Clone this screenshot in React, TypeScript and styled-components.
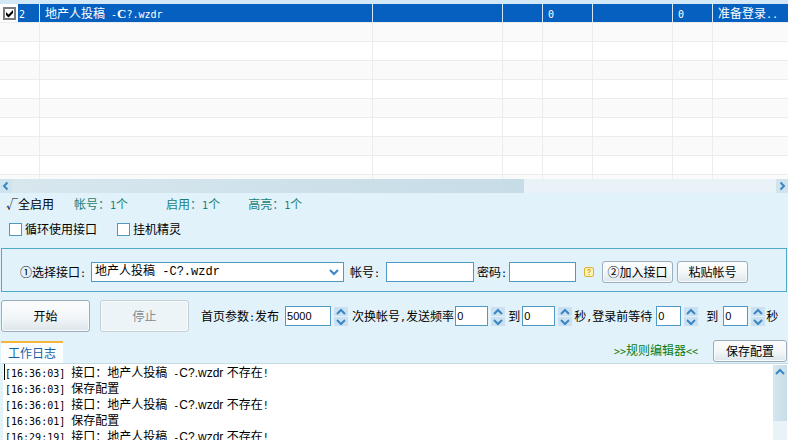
import React, { useId } from 'react';
import styled, { createGlobalStyle, css } from 'styled-components';

const cjk = '"Noto Sans CJK SC", "Liberation Sans", sans-serif';

const GlobalStyle = createGlobalStyle`
  *, *::before, *::after { box-sizing: border-box; }
  body { margin: 0; background: #e2f2fa; }
  body, button, input, select, textarea {
    font-family: ${cjk};
    font-size: 12px;
    line-height: 16px;
    color: #000;
  }
`;

const Window = styled.main`
  display: flex;
  flex-direction: column;
  height: 100vh;
  overflow: hidden;
  background: #e2f2fa;
  white-space: nowrap;
`;

/* Half-width characters: half of a 12px ideograph */
const Half = styled.span`
  font-family: "DejaVu Sans Mono", monospace;
  font-size: 10px;
  line-height: 1;
  white-space: pre;
`;

const SerifCap = styled.b`
  font-family: "Liberation Serif", serif;
  font-size: 13px;
  line-height: 1;
`;

/* ---------- account table ---------- */

const TablePane = styled.section`
  flex: none;
  height: 179px;
  overflow: hidden;
  border-top: 4px solid #d3e8f6;
  background: #fff;
`;

const Table = styled.table`
  width: 100%;
  table-layout: fixed;
  border-collapse: separate;
  border-spacing: 0;
`;

const Col = styled.col<{ $w?: number }>`
  ${p => p.$w && css`width: ${p.$w}px;`}
`;

const Row = styled.tr<{ $selected?: boolean }>`
  height: 19px;
  background: #fff;
  &:nth-child(even) { background: #fafafa; }
  ${p => p.$selected && css`
    color: #fff;
    td + td { background: #0560bf; border-right-color: #d6e8f8; }
  `}
`;

const Cell = styled.td<{ $first?: boolean; $tight?: boolean }>`
  height: 19px;
  padding: 0 0 0 ${p => (p.$first ? 3 : p.$tight ? 1 : 5)}px;
  border-bottom: 1px solid #ececec;
  border-right: ${p => (p.$first ? '0' : '1px solid #ececec')};
  line-height: 18px;
  overflow: hidden;
  &:last-child { border-right: 0; }
`;

const RowCheck = styled.label`
  display: grid;
  width: 13px;
  height: 13px;
  > * { grid-area: 1 / 1; }
`;

const RowCheckInput = styled.input`
  appearance: none;
  width: 13px;
  height: 13px;
  margin: 0;
  border: 2px solid #7c7c7c;
  background: #fff;
`;

const CheckMark = styled.svg`
  width: 13px;
  height: 13px;
  pointer-events: none;
`;

/* ---------- scroll bars ---------- */

const HBar = styled.div`
  flex: none;
  display: flex;
  height: 14px;
  background: #e9f2f6;
`;

const ArrowButton = styled.button`
  flex: none;
  display: grid;
  place-items: center;
  width: 12px;
  height: 14px;
  padding: 0;
  border: 0;
  background: #d0e4ee;
`;

const HTrack = styled.div`
  flex: 1;
`;

const HThumb = styled.div`
  width: 67%;
  height: 14px;
  background: linear-gradient(90deg, #d8e7ee, #c6dce7);
`;

const VBar = styled.div`
  flex: none;
  width: 14px;
  margin: 1px 1px 0 0;
  background: #e9f2f6;
`;

const VThumb = styled.div`
  height: 56px;
  padding-left: 1px;
  background: linear-gradient(90deg, #d6e6ee, #c6dde8);
  ${ArrowButton} { background: none; }
`;

/* ---------- status and options ---------- */

const Status = styled.div`
  flex: none;
  display: flex;
  align-items: center;
  height: 22px;
  padding-left: 6px;
`;

const Stat = styled.span<{ $gap: number }>`
  margin-left: ${p => p.$gap}px;
  color: #1b7f76;
`;

const Options = styled.div`
  flex: none;
  display: flex;
  align-items: center;
  gap: 20px;
  height: 28px;
  padding: 0 9px;
`;

const CheckLabel = styled.label`
  display: flex;
  align-items: center;
  gap: 3px;
`;

const CheckBox = styled.input`
  appearance: none;
  width: 13px;
  height: 13px;
  margin: 0;
  border: 1px solid #4f98c2;
  background: #fff;
  &:checked { background: #4f98c2; }
`;

/* ---------- forms ---------- */

const Panel = styled.form`
  flex: none;
  display: flex;
  align-items: center;
  height: 44px;
  margin: 5px 1px 0;
  padding: 4px 38px 0 18px;
  border: 1px solid #4fa9c9;
`;

const ParamRow = styled.form`
  flex: none;
  display: flex;
  align-items: center;
  height: 48px;
  padding-left: 1px;
`;

const Text = styled.label<{ $l?: number; $r?: number }>`
  flex: none;
  margin: 0 ${p => p.$r ?? 0}px 0 ${p => p.$l ?? 0}px;
`;

const box = css`
  height: 20px;
  border: 1px solid #5099c4;
  border-radius: 0;
  background: #fff;
  outline: none;
`;

const SelectWrap = styled.div`
  flex: 253 1 0;
  display: grid;
  grid-template-columns: 1fr auto;
  align-items: center;
`;

const Select = styled.select`
  ${box}
  grid-area: 1 / 1 / 2 / 3;
  appearance: none;
  width: 100%;
  padding: 0 16px 0 3px;
  font-family: "Liberation Mono", "Noto Sans CJK SC", monospace;
`;

const SelectArrow = styled.span`
  grid-area: 1 / 2;
  display: flex;
  margin-right: 5px;
  pointer-events: none;
`;

const Input = styled.input<{ $grow: number }>`
  ${box}
  flex: ${p => p.$grow} 1 0;
  min-width: 0;
  padding: 0 2px;
`;

const Button = styled.button<{ $w: number; $tall?: boolean; $l?: number }>`
  flex: none;
  width: ${p => p.$w}px;
  height: ${p => (p.$tall ? 32 : 22)}px;
  margin-left: ${p => p.$l ?? 0}px;
  padding: 0;
  border: 1px solid #9dadbb;
  border-radius: 3px;
  background: linear-gradient(#fcfdfd, #f3f7f9 50%, #dde6eb);
  box-shadow: inset 0 0 0 1px #f8fbfc;
  &:disabled {
    color: #858b8e;
    border-color: #c3ced5;
    background: #edf4f7;
  }
`;

const HelpButton = styled.button`
  flex: none;
  display: flex;
  margin: 0 8px;
  padding: 0;
  border: 0;
  background: none;
`;

const NumberBox = styled.span`
  flex: none;
  display: flex;
  align-items: center;
  gap: 1px;
`;

const NumberInput = styled.input<{ $w: number }>`
  ${box}
  width: ${p => p.$w}px;
  padding: 0 1px;
  font-family: "Liberation Sans", sans-serif;
  font-size: 11px;
`;

const SpinButtons = styled.span`
  display: flex;
  flex-direction: column;
  align-items: flex-end;
  gap: 1px;
  width: 16px;
`;

const SpinButton = styled.button`
  display: grid;
  place-items: center;
  width: 14px;
  height: 9px;
  padding: 0;
  border: 0;
  background: #cbe1f1;
`;

/* ---------- log ---------- */

const TabRow = styled.div`
  flex: none;
  display: flex;
  align-items: flex-end;
  height: 23px;
  padding: 0 1px;
`;

const Tab = styled.button`
  flex: none;
  width: 62px;
  height: 22px;
  margin-right: auto;
  padding: 0;
  border: 0;
  border-top: 2px solid #f5b63c;
  background: #fbfdfe;
  color: #1a5fa5;
`;

const RuleLink = styled.a`
  align-self: center;
  margin: 0 15px 3px 0;
  color: #0e7b0e;
  text-decoration: none;
`;

const SaveSlot = styled.span`
  align-self: flex-start;
  display: flex;
`;

const LogPane = styled.section`
  flex: 1;
  min-height: 0;
  display: flex;
  margin-left: 1px;
  border-top: 1px solid #c5dbe4;
  border-left: 2px solid #e2f2fa;
  background: #fff;
  overflow: hidden;
`;

const Lines = styled.div`
  flex: 1;
  padding-left: 2px;
`;

const Line = styled.p`
  height: 16px;
  margin: 0;
  line-height: 16px;
  &:first-child { box-shadow: -1px 0 #000; }
`;

const Arial = styled.span`
  font-family: "Liberation Sans", Arial, sans-serif;
  line-height: 1;
`;

const paths = {
  left: 'M6.5 1.5 L3 5 L6.5 8.5',
  right: 'M3.5 1.5 L7 5 L3.5 8.5',
  up: 'M1 7 L5 3 L9 7',
  down: 'M1 3 L5 7 L9 3',
};

function Chevron({ dir }: { dir: keyof typeof paths }) {
  return (
    <svg width="10" height="10" viewBox="0 0 10 10" fill="none" aria-hidden="true">
      <path d={paths[dir]} stroke="#3b86c4" strokeWidth="2" />
    </svg>
  );
}

function AccountName() {
  return (
    <>
      地产人投稿<Half> -</Half><SerifCap>C</SerifCap><Half>?.wzdr</Half>
    </>
  );
}

function Spinner({ id, value, width }: { id: string; value: string; width: number }) {
  return (
    <NumberBox>
      <NumberInput id={id} $w={width} inputMode="numeric" defaultValue={value} />
      <SpinButtons>
        <SpinButton type="button" aria-label="增加"><Chevron dir="up" /></SpinButton>
        <SpinButton type="button" aria-label="减少"><Chevron dir="down" /></SpinButton>
      </SpinButtons>
    </NumberBox>
  );
}

const emptyRows = Array.from({ length: 9 }, (_, i) => i);
const emptyCells = Array.from({ length: 8 }, (_, i) => i);

const log = [
  { time: '16:36:03', saved: false },
  { time: '16:36:03', saved: true },
  { time: '16:36:01', saved: false },
  { time: '16:36:01', saved: true },
  { time: '16:29:19', saved: false },
];

export default function App() {
  const id = useId();
  return (
    <Window>
      <GlobalStyle />
      <TablePane>
        <Table>
          <colgroup>
            <Col $w={18} /><Col $w={22} /><Col /><Col $w={130} /><Col $w={40} />
            <Col $w={50} /><Col $w={80} /><Col $w={40} /><Col $w={75} />
          </colgroup>
          <tbody>
            <Row $selected>
              <Cell $first>
                <RowCheck>
                  <RowCheckInput type="checkbox" defaultChecked aria-label="启用" />
                  <CheckMark viewBox="0 0 13 13" aria-hidden="true">
                    <path d="M3 5 L5.5 7.5 L10 3 V6 L5.5 10.5 L3 8 Z" fill="#000" />
                  </CheckMark>
                </RowCheck>
              </Cell>
              <Cell $tight><Half>2</Half></Cell>
              <Cell><AccountName /></Cell>
              <Cell />
              <Cell />
              <Cell><Half>0</Half></Cell>
              <Cell />
              <Cell><Half>0</Half></Cell>
              <Cell>准备登录<Half>..</Half></Cell>
            </Row>
            {emptyRows.map(r => (
              <Row key={r}>
                <Cell $first />
                {emptyCells.map(c => <Cell key={c} />)}
              </Row>
            ))}
          </tbody>
        </Table>
      </TablePane>

      <HBar>
        <ArrowButton type="button" aria-label="向左"><Chevron dir="left" /></ArrowButton>
        <HTrack><HThumb /></HTrack>
        <ArrowButton type="button" aria-label="向右"><Chevron dir="right" /></ArrowButton>
      </HBar>

      <Status>
        <span>√全启用</span>
        <Stat $gap={20}>帐号：<Half>1</Half>个</Stat>
        <Stat $gap={38}>启用：<Half>1</Half>个</Stat>
        <Stat $gap={28}>高亮：<Half>1</Half>个</Stat>
      </Status>

      <Options>
        <CheckLabel><CheckBox type="checkbox" />循环使用接口</CheckLabel>
        <CheckLabel><CheckBox type="checkbox" />挂机精灵</CheckLabel>
      </Options>

      <Panel onSubmit={e => e.preventDefault()}>
        <Text htmlFor={`${id}api`} $r={5}>①选择接口<Half>:</Half></Text>
        <SelectWrap>
          <Select id={`${id}api`}>
            <option>地产人投稿 -C?.wzdr</option>
          </Select>
          <SelectArrow><Chevron dir="down" /></SelectArrow>
        </SelectWrap>
        <Text htmlFor={`${id}user`} $l={6} $r={6}>帐号<Half>:</Half></Text>
        <Input id={`${id}user`} type="text" $grow={82} />
        <Text htmlFor={`${id}pass`} $l={3} $r={2}>密码<Half>:</Half></Text>
        <Input id={`${id}pass`} type="password" $grow={61} />
        <HelpButton type="button" aria-label="帮助">
          <svg width="10" height="10" viewBox="0 0 10 10" fill="none" aria-hidden="true">
            <rect x="0.5" y="0.5" width="9" height="9" rx="1.5" fill="#fff3b0" stroke="#d9b23c" />
            <path d="M3.5 3.5 Q3.5 2.5 5 2.5 Q6.5 2.5 6.5 3.5 Q6.5 4.5 5 5 V6 M5 7 V8" stroke="#c8962a" />
          </svg>
        </HelpButton>
        <Button type="button" $w={71}>②加入接口</Button>
        <Button type="button" $w={71} $l={4}>粘贴帐号</Button>
      </Panel>

      <ParamRow onSubmit={e => e.preventDefault()}>
        <Button type="button" $w={89} $tall>开始</Button>
        <Button type="button" $w={89} $tall $l={10} disabled>停止</Button>
        <Text htmlFor={`${id}count`} $l={12} $r={6}>首页参数<Half>:</Half>发布</Text>
        <Spinner id={`${id}count`} value="5000" width={46} />
        <Text htmlFor={`${id}from`} $l={4} $r={1}>次换帐号<Half>,</Half>发送频率</Text>
        <Spinner id={`${id}from`} value="0" width={33} />
        <Text htmlFor={`${id}to`} $l={3} $r={2}>到</Text>
        <Spinner id={`${id}to`} value="0" width={33} />
        <Text htmlFor={`${id}wait`} $l={2} $r={4}>秒<Half>,</Half>登录前等待</Text>
        <Spinner id={`${id}wait`} value="0" width={25} />
        <Text htmlFor={`${id}until`} $l={8} $r={5}>到</Text>
        <Spinner id={`${id}until`} value="0" width={25} />
        <Text as="span" $l={1}>秒</Text>
      </ParamRow>

      <TabRow>
        <Tab type="button">工作日志</Tab>
        <RuleLink href="#rules"><Half>&gt;&gt;</Half>规则编辑器<Half>&lt;&lt;</Half></RuleLink>
        <SaveSlot><Button type="button" $w={74}>保存配置</Button></SaveSlot>
      </TabRow>

      <LogPane>
        <Lines role="log">
          {log.map((entry, i) => (
            <Line key={i}>
              <Half>[{entry.time}] </Half>
              {entry.saved ? '保存配置' : (
                <>接口：地产人投稿<Half> -</Half><Arial>C?.wzdr </Arial>不存在<Half>!</Half></>
              )}
            </Line>
          ))}
        </Lines>
        <VBar>
          <VThumb>
            <ArrowButton type="button" aria-label="向上"><Chevron dir="up" /></ArrowButton>
          </VThumb>
        </VBar>
      </LogPane>
    </Window>
  );
}
